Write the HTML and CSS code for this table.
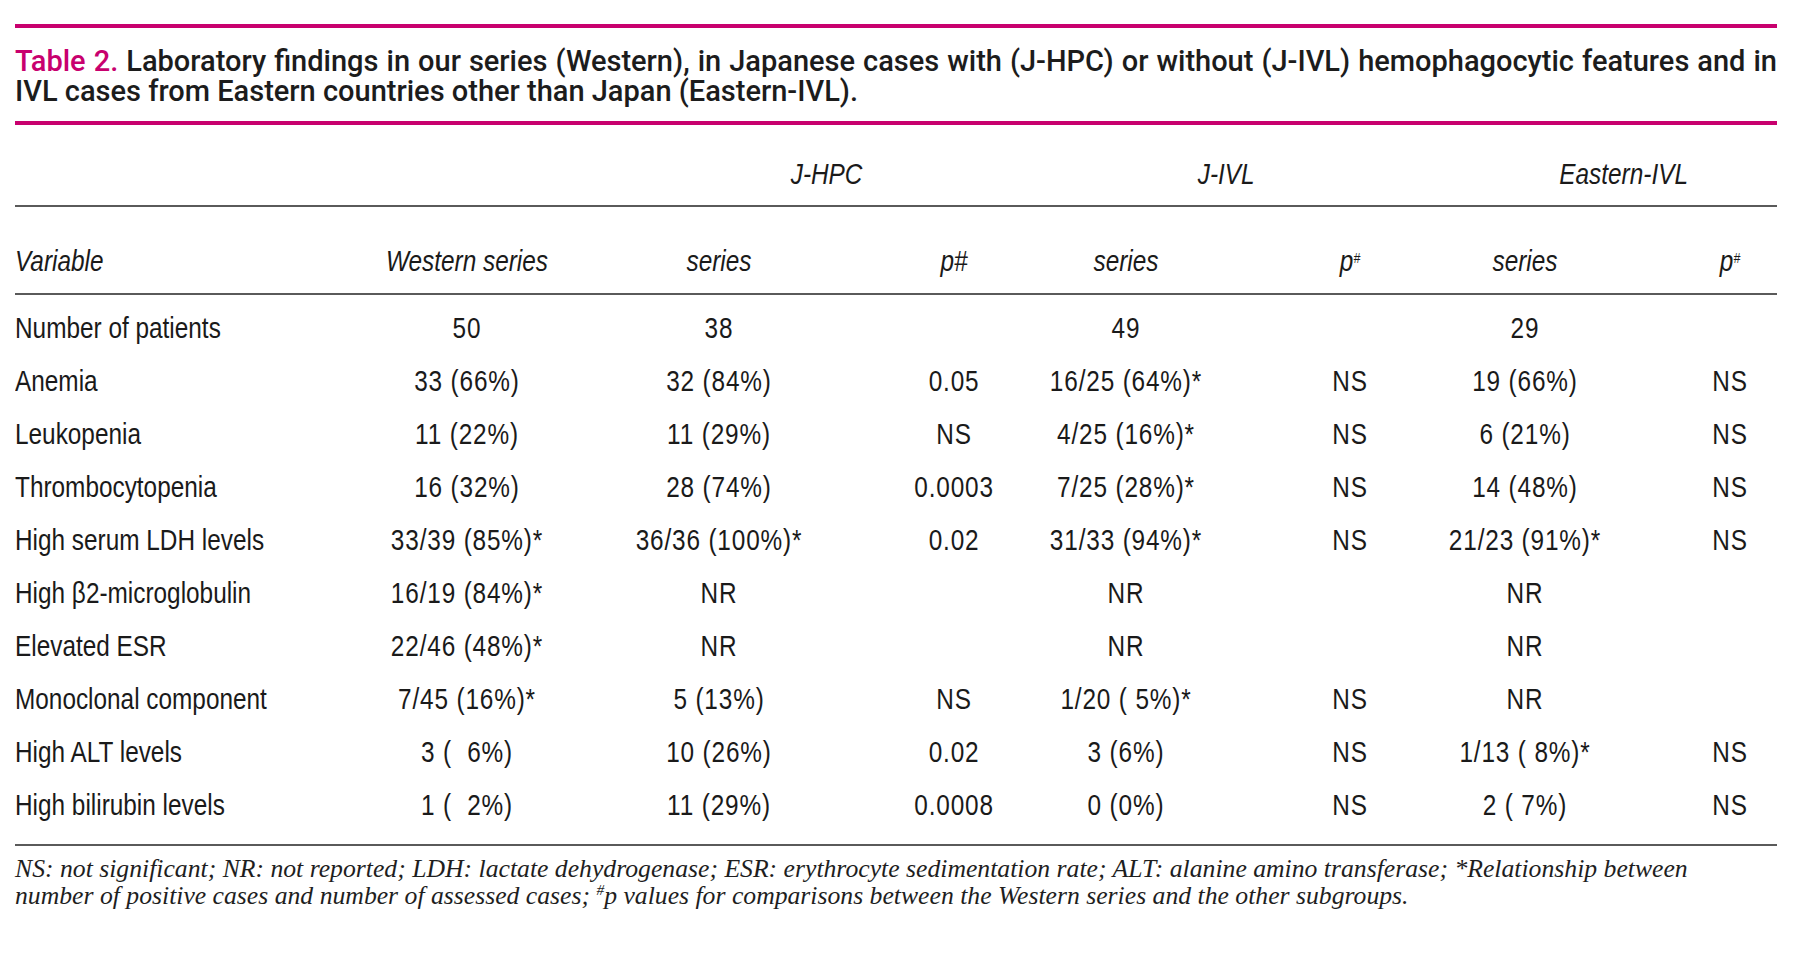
FILE: index.html
```html
<!DOCTYPE html>
<html lang="en">
<head>
<meta charset="utf-8">
<title>Table 2</title>
<link rel="stylesheet" href="styles.css">
</head>
<body>
<div class="page">
  <div class="rule-magenta rule-top"></div>
  <div class="caption">
    <span class="cap-l1"><span class="cap-label">Table 2.</span> Laboratory findings in our series (Western), in Japanese cases with (J-HPC) or without (J-IVL) hemophagocytic features and in</span>
    <span class="cap-l2">IVL cases from Eastern countries other than Japan (Eastern-IVL).</span>
  </div>
  <div class="rule-magenta rule-bottom"></div>

  <div class="table-wrap">
    <div class="table">
      <div class="row group-row">
        <div class="g g-blank"></div>
        <div class="g g-jhpc">J-HPC</div>
        <div class="g g-jivl">J-IVL</div>
        <div class="g g-east">Eastern-IVL</div>
      </div>
      <div class="row head-row">
        <div class="c">Variable</div>
        <div class="c">Western series</div>
        <div class="c">series</div>
        <div class="c">p#</div>
        <div class="c">series</div>
        <div class="c">p<sup>#</sup></div>
        <div class="c">series</div>
        <div class="c">p<sup>#</sup></div>
      </div>
      <div class="body">
        <div class="row"><div class="c">Number of patients</div><div class="c">50</div><div class="c">38</div><div class="c"></div><div class="c">49</div><div class="c"></div><div class="c">29</div><div class="c"></div></div>
        <div class="row"><div class="c">Anemia</div><div class="c">33 (66%)</div><div class="c">32 (84%)</div><div class="c">0.05</div><div class="c">16/25 (64%)*</div><div class="c">NS</div><div class="c">19 (66%)</div><div class="c">NS</div></div>
        <div class="row"><div class="c">Leukopenia</div><div class="c">11 (22%)</div><div class="c">11 (29%)</div><div class="c">NS</div><div class="c">4/25 (16%)*</div><div class="c">NS</div><div class="c">6 (21%)</div><div class="c">NS</div></div>
        <div class="row"><div class="c">Thrombocytopenia</div><div class="c">16 (32%)</div><div class="c">28 (74%)</div><div class="c">0.0003</div><div class="c">7/25 (28%)*</div><div class="c">NS</div><div class="c">14 (48%)</div><div class="c">NS</div></div>
        <div class="row"><div class="c">High serum LDH levels</div><div class="c">33/39 (85%)*</div><div class="c">36/36 (100%)*</div><div class="c">0.02</div><div class="c">31/33 (94%)*</div><div class="c">NS</div><div class="c">21/23 (91%)*</div><div class="c">NS</div></div>
        <div class="row"><div class="c">High β2-microglobulin</div><div class="c">16/19 (84%)*</div><div class="c">NR</div><div class="c"></div><div class="c">NR</div><div class="c"></div><div class="c">NR</div><div class="c"></div></div>
        <div class="row"><div class="c">Elevated ESR</div><div class="c">22/46 (48%)*</div><div class="c">NR</div><div class="c"></div><div class="c">NR</div><div class="c"></div><div class="c">NR</div><div class="c"></div></div>
        <div class="row"><div class="c">Monoclonal component</div><div class="c">7/45 (16%)*</div><div class="c">5 (13%)</div><div class="c">NS</div><div class="c">1/20 ( 5%)*</div><div class="c">NS</div><div class="c">NR</div><div class="c"></div></div>
        <div class="row"><div class="c">High ALT levels</div><div class="c">3 (  6%)</div><div class="c">10 (26%)</div><div class="c">0.02</div><div class="c">3 (6%)</div><div class="c">NS</div><div class="c">1/13 ( 8%)*</div><div class="c">NS</div></div>
        <div class="row"><div class="c">High bilirubin levels</div><div class="c">1 (  2%)</div><div class="c">11 (29%)</div><div class="c">0.0008</div><div class="c">0 (0%)</div><div class="c">NS</div><div class="c">2 ( 7%)</div><div class="c">NS</div></div>
      </div>
    </div>
  </div>

  <p class="footnote">NS: not significant; NR: not reported; LDH: lactate dehydrogenase; ESR: erythrocyte sedimentation rate; ALT: alanine amino transferase; *Relationship between number of positive cases and number of assessed cases; <sup>#</sup>p values for comparisons between the Western series and the other subgroups.</p>
</div>
</body>
</html>
```
FILE: styles.css
```css
html, body {
  margin: 0;
  padding: 0;
  background: #ffffff;
  overflow: hidden;
}

.page {
  width: 1762px;
  padding: 24px 23px 0 15px;
  color: #1a1a1a;
}

.rule-magenta {
  height: 4px;
  background: #c8006e;
}

.caption {
  margin-top: 18px;
  font-family: Roboto, "Liberation Sans", Arial, sans-serif;
  font-weight: 500;
  font-size: 29px;
  line-height: 30px;
  color: #1c1c1c;
}

.cap-l1 {
  display: block;
  text-align: justify;
  text-align-last: justify;
}

.cap-l2 {
  display: block;
}

.cap-label {
  color: #c8006e;
}

.rule-bottom {
  margin-top: 15px;
}

/* The table uses a condensed face: Liberation Sans narrowed horizontally */
.table-wrap {
  width: 1762px;
  overflow: hidden;
}

.table {
  width: 2097.7px;
  transform: scaleX(0.84);
  transform-origin: 0 0;
  font-family: "Liberation Sans", Arial, sans-serif;
  font-size: 29px;
  color: #1a1a1a;
}

.row {
  display: grid;
  grid-template-columns: 388.1px 300px 289.9px 242.3px 235.7px 237.5px 226.2px 178px;
  height: 53px;
  align-items: center;
}

.c {
  text-align: center;
  white-space: pre;
  line-height: 30px;
  letter-spacing: 1px;
}

.row > .c:nth-child(1) { text-align: left; letter-spacing: 0; }
.row > .c:nth-child(3) { padding-left: 10.1px; }
.row > .c:nth-child(4) { padding-left: 37.5px; }
.row > .c:nth-child(5) { padding-right: 31px; }
.row > .c:nth-child(6) { padding-left: 29.2px; }
.row > .c:nth-child(7) { padding-right: 17.9px; }
.row > .c:nth-child(8) { padding-left: 66.1px; }

.group-row {
  height: auto;
  padding: 34px 0 16px;
  border-bottom: 2px solid #5a5a5a;
  font-style: italic;
}

.g {
  text-align: center;
  line-height: 30px;
  grid-column: span 2;
}

.g-jhpc { padding-left: 24px; }
.g-jivl { padding-right: 30px; }
.g-east { padding-left: 39px; }

.head-row {
  height: auto;
  padding: 39px 0 17px;
  border-bottom: 2px solid #5a5a5a;
  font-style: italic;
}

.head-row .c {
  letter-spacing: 0;
}

sup {
  font-size: 0.5em;
  line-height: 0;
  vertical-align: baseline;
  position: relative;
  top: -0.55em;
}

.body {
  padding: 6px 0 13px;
  border-bottom: 2px solid #5a5a5a;
}

.footnote {
  margin: 10px 0 0;
  width: 1720px;
  font-family: "Liberation Serif", "Times New Roman", serif;
  font-style: italic;
  font-size: 25.7px;
  line-height: 26.5px;
  color: #1e1e1e;
}

.footnote sup {
  font-size: 0.6em;
  top: -0.55em;
}
```
